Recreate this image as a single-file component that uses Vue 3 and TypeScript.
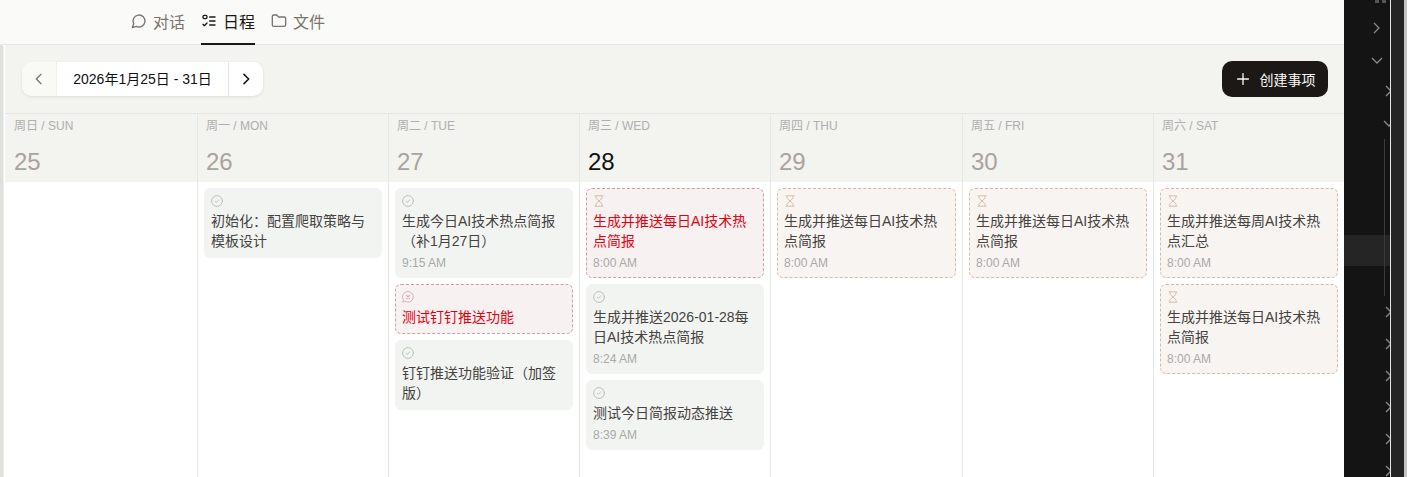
<template>
  <div class="app">
    <div class="main">
      <header class="topbar">
        <button v-for="tab in tabs" :key="tab.key" class="tab" :class="{ active: tab.key === 'schedule' }">
          <svg class="tab-icon" viewBox="0 0 24 24" fill="none" stroke="currentColor" stroke-width="2" stroke-linecap="round" stroke-linejoin="round">
            <path v-for="d in tab.paths" :key="d" :d="d" />
          </svg>
          <span>{{ tab.label }}</span>
        </button>
      </header>

      <div class="body">
        <div class="edge"></div>
        <div class="content">
          <div class="toolbar">
            <div class="pager">
              <button class="page-btn prev">
                <svg viewBox="0 0 24 24" fill="none" stroke="currentColor" stroke-width="2" stroke-linecap="round" stroke-linejoin="round"><path d="m15 5-7 7 7 7" /></svg>
              </button>
              <div class="range">2026年1月25日 - 31日</div>
              <button class="page-btn next">
                <svg viewBox="0 0 24 24" fill="none" stroke="currentColor" stroke-width="2.4" stroke-linecap="round" stroke-linejoin="round"><path d="m9 5 7 7-7 7" /></svg>
              </button>
            </div>
            <button class="create">
              <svg viewBox="0 0 16 16" fill="none" stroke="currentColor" stroke-width="1.5" stroke-linecap="round"><path d="M8 1.8v12.4M1.8 8h12.4" /></svg>
              <span>创建事项</span>
            </button>
          </div>

          <div class="week">
            <section v-for="day in days" :key="day.num" class="day">
              <div class="day-head">
                <div class="weekday">{{ day.label }}</div>
                <div class="num" :class="{ today: day.today }">{{ day.num }}</div>
              </div>
              <div class="day-body">
                <article v-for="item in day.items" :key="item.title" class="card" :class="[item.status, { urgent: item.alert }]">
                  <svg class="status" viewBox="0 0 12 12" fill="none" stroke="currentColor" stroke-linecap="round" stroke-linejoin="round">
                    <template v-if="item.status === 'done'">
                      <circle cx="6" cy="6" r="5.4" />
                      <path d="m4.2 6.2 1.3 1.2 2.3-2.6" stroke-width="0.9" />
                    </template>
                    <template v-else-if="item.status === 'failed'">
                      <path d="M3 10.4A5.4 5.4 0 1 0 1.4 8.8L.9 11Z" />
                      <path d="m4.5 4.5 3 3m0-3-3 3" stroke-width="1.2" />
                    </template>
                    <template v-else>
                      <path d="M2 .8h8M2 11.2h8M3 .8v2.4L6 6l3-2.8V.8M3 11.2V8.8L6 6l3 2.8v2.4" />
                    </template>
                  </svg>
                  <div class="title">{{ item.title }}</div>
                  <div v-if="item.time" class="time">{{ item.time }}</div>
                </article>
              </div>
            </section>
          </div>
        </div>
      </div>
    </div>

    <aside class="side">
      <div class="tree">
        <div class="clipped"></div>
        <div class="row"><svg viewBox="0 0 16 16"><path d="m6 3 5 5-5 5" /></svg></div>
        <div class="row open"><svg viewBox="0 0 16 16"><path d="m3 6 5 5 5-5" /></svg></div>
        <div class="row sub"><svg viewBox="0 0 16 16"><path d="m6 3 5 5-5 5" /></svg></div>
        <div class="row sub open"><svg viewBox="0 0 16 16"><path d="m3 6 5 5 5-5" /></svg></div>
        <div class="group">
          <div class="selected"></div>
        </div>
        <div v-for="n in 6" :key="n" class="row sub"><svg viewBox="0 0 16 16"><path d="m6 3 5 5-5 5" /></svg></div>
      </div>
      <div class="rail"></div>
      <div class="gutter"></div>
    </aside>
  </div>
</template>

<script setup lang="ts">
type Status = 'done' | 'failed' | 'pending'

interface Item {
  title: string
  time?: string
  status: Status
  alert?: boolean
}

interface Day {
  label: string
  num: number
  today?: boolean
  items: Item[]
}

const tabs = [
  { key: 'chat', label: '对话', paths: ['M7.9 20A9 9 0 1 0 4 16.1L2 22Z'] },
  {
    key: 'schedule',
    label: '日程',
    paths: ['M3 5.5a2 2 0 0 1 2-2h2a2 2 0 0 1 2 2v1a2 2 0 0 1-2 2H5a2 2 0 0 1-2-2Z', 'm3 17 2 2 4-4', 'M13 6h8', 'M13 12h8', 'M13 18h8']
  },
  {
    key: 'files',
    label: '文件',
    paths: ['M20 20a2 2 0 0 0 2-2V8a2 2 0 0 0-2-2h-7.9a2 2 0 0 1-1.69-.9L9.6 3.9A2 2 0 0 0 7.93 3H4a2 2 0 0 0-2 2v13a2 2 0 0 0 2 2Z']
  }
]

const days: Day[] = [
  { label: '周日 / SUN', num: 25, items: [] },
  {
    label: '周一 / MON',
    num: 26,
    items: [{ title: '初始化：配置爬取策略与模板设计', status: 'done' }]
  },
  {
    label: '周二 / TUE',
    num: 27,
    items: [
      { title: '生成今日AI技术热点简报（补1月27日）', time: '9:15 AM', status: 'done' },
      { title: '测试钉钉推送功能', status: 'failed', alert: true },
      { title: '钉钉推送功能验证（加签版）', status: 'done' }
    ]
  },
  {
    label: '周三 / WED',
    num: 28,
    today: true,
    items: [
      { title: '生成并推送每日AI技术热点简报', time: '8:00 AM', status: 'pending', alert: true },
      { title: '生成并推送2026-01-28每日AI技术热点简报', time: '8:24 AM', status: 'done' },
      { title: '测试今日简报动态推送', time: '8:39 AM', status: 'done' }
    ]
  },
  {
    label: '周四 / THU',
    num: 29,
    items: [{ title: '生成并推送每日AI技术热点简报', time: '8:00 AM', status: 'pending' }]
  },
  {
    label: '周五 / FRI',
    num: 30,
    items: [{ title: '生成并推送每日AI技术热点简报', time: '8:00 AM', status: 'pending' }]
  },
  {
    label: '周六 / SAT',
    num: 31,
    items: [
      { title: '生成并推送每周AI技术热点汇总', time: '8:00 AM', status: 'pending' },
      { title: '生成并推送每日AI技术热点简报', time: '8:00 AM', status: 'pending' }
    ]
  }
]
</script>

<style>
html,
body {
  margin: 0;
  overflow: hidden;
}
</style>

<style scoped>
.app {
  display: flex;
  width: 1407px;
  height: 477px;
  overflow: hidden;
  font-family: 'Liberation Sans', 'Noto Sans CJK SC', sans-serif;
  background: #fff;
}

.main {
  width: 1344px;
  display: flex;
  flex-direction: column;
  flex: none;
}

button {
  font: inherit;
  border: none;
  background: none;
  padding: 0;
}

.topbar {
  height: 45px;
  box-sizing: border-box;
  flex: none;
  padding-left: 131px;
  display: flex;
  gap: 16px;
  background: #fafaf8;
  border-bottom: 1px solid #e6e6e2;
}

.tab {
  display: flex;
  align-items: center;
  gap: 6px;
  height: 45px;
  box-sizing: border-box;
  padding-bottom: 1px;
  font-size: 16px;
  color: #7c746d;
  border-bottom: 2px solid transparent;
}

.tab.active {
  color: #1c1815;
  border-bottom-color: #1c1815;
}

.tab-icon {
  width: 16px;
  height: 16px;
}

.body {
  flex: 1;
  display: flex;
  min-height: 0;
}

.edge {
  width: 3px;
  flex: none;
  background: #dfdfdc;
  border-right: 1px solid #efefea;
  border-top-right-radius: 3px;
}

.content {
  flex: 1;
  min-width: 0;
  margin-left: 1px;
  display: flex;
  flex-direction: column;
}

.toolbar {
  height: 69px;
  flex: none;
  box-sizing: border-box;
  padding: 0 16px 0 17px;
  display: flex;
  align-items: center;
  justify-content: space-between;
  background: #f3f3ef;
  border-bottom: 1px solid #e6e6e2;
}

.pager {
  display: flex;
  height: 34px;
  width: 241px;
  border-radius: 10px;
  overflow: hidden;
  background: #fff;
  box-shadow: 0 1px 3px rgba(28, 24, 21, 0.1);
}

.page-btn {
  width: 35px;
  flex: none;
  display: flex;
  align-items: center;
  justify-content: center;
  color: #1c1815;
}

.page-btn svg {
  width: 16px;
  height: 16px;
}

.page-btn.prev {
  background: #f9f9f6;
  color: #7c746d;
  border-right: 1px solid #eeeeea;
}

.page-btn.next {
  border-left: 1px solid #e6e6e2;
}

.range {
  flex: 1;
  text-align: center;
  font-size: 14px;
  line-height: 34px;
  color: #111;
}

.create {
  height: 36px;
  width: 106px;
  box-sizing: border-box;
  padding-left: 1px;
  display: flex;
  align-items: center;
  justify-content: center;
  gap: 10px;
  border-radius: 10px;
  background: #1c1815;
  color: #fafaf8;
  font-size: 14px;
}

.create svg {
  width: 14px;
  height: 14px;
}

.week {
  flex: 1;
  display: grid;
  grid-template-columns: 193px 191px 191px 191px 192px 191px 1fr;
  min-height: 0;
}

.day {
  min-width: 0;
  display: flex;
  flex-direction: column;
  border-right: 1px solid #e6e6e2;
}

.day:last-child {
  border-right: none;
}

.day-head {
  height: 68px;
  flex: none;
  box-sizing: border-box;
  padding: 5px 8px 0;
  background: #f3f3ef;
}

.day:first-child .day-head {
  padding-left: 9px;
}

.weekday {
  font-size: 12px;
  line-height: 14px;
  color: #b0aeae;
}

.num {
  margin-top: 15px;
  font-size: 24px;
  line-height: 28px;
  color: #aaa39c;
}

.num.today {
  color: #111;
}

.day-body {
  flex: 1;
  padding: 6px;
  display: flex;
  flex-direction: column;
  gap: 6px;
}

.card {
  box-sizing: border-box;
  padding: 6px;
  border: 1px solid transparent;
  border-radius: 6px;
  background: #f2f4f1;
  color: #b5c5b3;
}

.card.failed,
.card.urgent {
  background: #f7f1f2;
  border: 1px dashed #c9a0a6;
}

.card.failed {
  color: #d6b0b5;
}

.card.pending {
  background: #f8f4f1;
  border: 1px dashed #d4bcaa;
  color: #d5c0ad;
}

.card.pending.urgent {
  background: #f7f1f2;
  border-color: #c9a0a6;
}

.status {
  display: block;
  width: 12px;
  height: 12px;
  margin-bottom: 4px;
}

.title {
  font-size: 14px;
  line-height: 20px;
  color: #45423f;
}

.urgent .title {
  color: #e6000f;
}

.time {
  padding-top: 4px;
  font-size: 12px;
  line-height: 16px;
  color: #a9a9a9;
}

.side {
  width: 63px;
  flex: none;
  display: flex;
  background: #141414;
}

.tree {
  width: 46px;
  flex: none;
  padding-top: 12px;
  overflow: hidden;
  position: relative;
}

.clipped {
  position: absolute;
  top: 0;
  left: 31px;
  width: 11px;
  height: 3px;
  background: linear-gradient(90deg, #555 0 4px, #141414 4px 7px, #555 7px);
}

.row {
  height: 31.8px;
  display: flex;
  align-items: center;
  padding-left: 24px;
}

.row.sub {
  padding-left: 36px;
}

.row.open {
  padding-left: 25px;
}

.row.sub.open {
  padding-left: 37px;
}

.row svg {
  width: 16px;
  height: 16px;
  flex: none;
  fill: none;
  stroke: #8a8a8a;
  stroke-width: 1.3;
}

.group {
  height: 157px;
  box-sizing: border-box;
  padding-top: 96px;
  position: relative;
}

.group::before {
  content: '';
  position: absolute;
  left: 40px;
  top: 0;
  bottom: 0;
  width: 1px;
  background: #3a3a3a;
}

.selected {
  height: 31px;
  background: #252525;
}

.rail {
  width: 1px;
  flex: none;
  background: #e8e8e8;
}

.gutter {
  flex: 1;
  background: #252525;
  border-right: 3px solid #c4c4c4;
}
</style>
